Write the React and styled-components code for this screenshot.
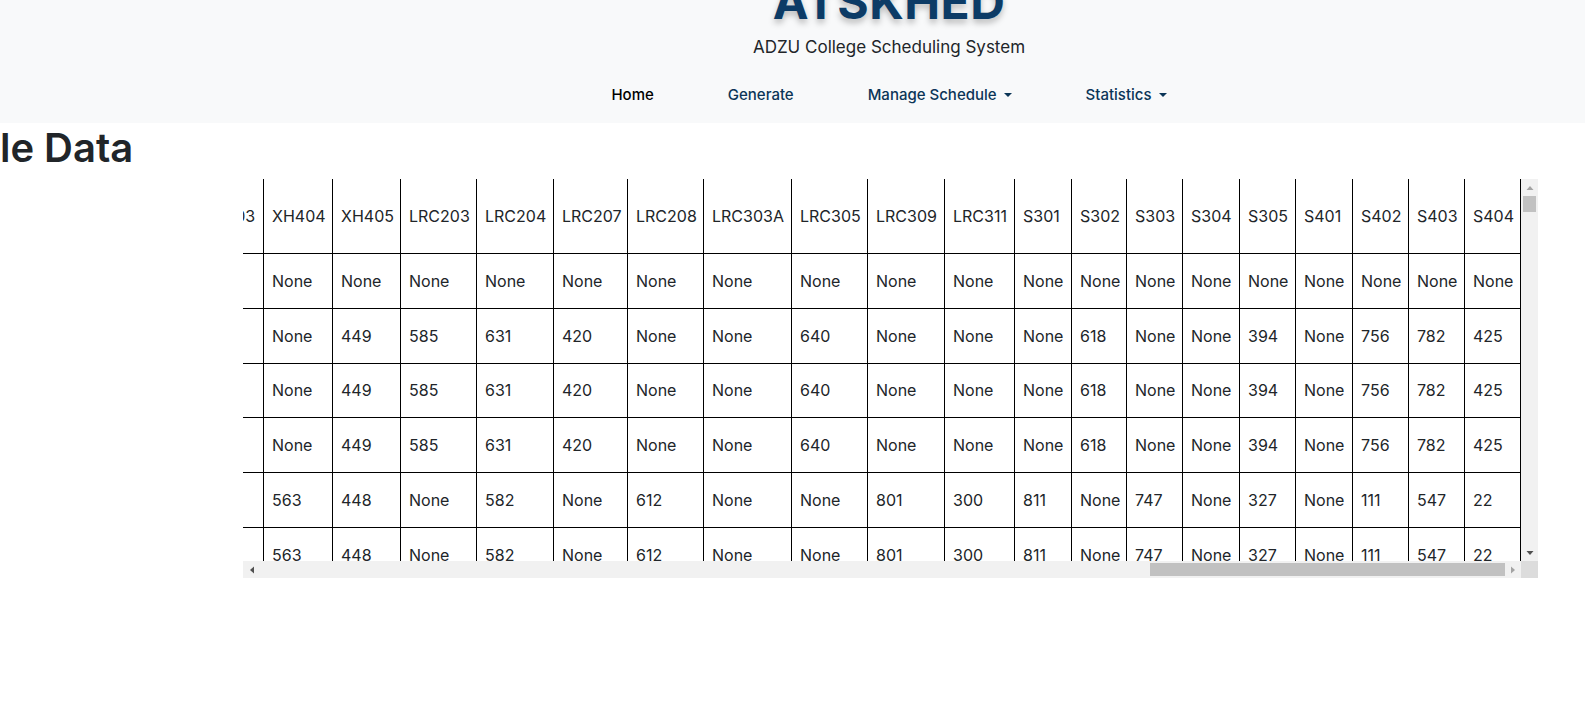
import React, { useLayoutEffect, useRef, useState } from 'react';
import styled, { createGlobalStyle } from 'styled-components';

const GlobalStyle = createGlobalStyle`
  html, body {
    margin: 0;
    overflow: hidden;
    background: #fff;
  }
  body {
    font-family: Inter, "Noto Sans", sans-serif;
    color: #212529;
  }
`;

const Header = styled.header`
  display: flex;
  flex-direction: column;
  align-items: center;
  background-color: #f8f9fa;
  padding: 0 0 10px 193px;
`;

const Title = styled.h1`
  margin: -27px 0 0;
  font-size: 48px;
  line-height: 58px;
  font-weight: 700;
  letter-spacing: 0.5px;
  color: #0c3b66;
  text-shadow: 0 4px 6px rgba(0, 0, 0, 0.25);
`;

const Subtitle = styled.div`
  margin-top: 4px;
  font-size: 17px;
  line-height: 24px;
  color: #212529;
`;

const Nav = styled.nav`
  display: flex;
  margin-top: 17px;
`;

const NavLink = styled.a`
  padding: 8px 37px;
  font-size: 15px;
  line-height: 21px;
  font-weight: 500;
  color: ${props => props.$active ? '#000' : '#0b3557'};
  text-decoration: none;
  cursor: pointer;
  ${props => props.$dropdown && `
    &::after {
      content: "";
      display: inline-block;
      margin-left: 7px;
      vertical-align: 3px;
      border-top: 4px solid;
      border-left: 4px solid transparent;
      border-right: 4px solid transparent;
    }
  `}
`;

const Heading = styled.h2`
  margin: 1px 0 0 -147px;
  font-size: 40px;
  line-height: 48px;
  font-weight: 600;
  color: #212529;
  white-space: nowrap;
`;

const TableFrame = styled.div`
  display: grid;
  grid-template-columns: 1278px 17px;
  grid-template-rows: 382px 17px;
  margin: 7px 0 0 243px;
  width: 1295px;
`;

const TableViewport = styled.div`
  overflow: hidden;
`;

const VBar = styled.div`
  display: flex;
  flex-direction: column;
  background: #f1f1f1;
`;

const HBar = styled.div`
  display: flex;
  background: #f1f1f1;
`;

const Corner = styled.div`
  background: #dcdcdc;
`;

const ScrollBtn = styled.div`
  flex: none;
  width: 17px;
  height: 17px;
  display: flex;
  align-items: center;
  justify-content: center;
  color: ${props => props.$disabled ? '#a3a3a3' : '#505050'};
`;

const Track = styled.div`
  flex: 1;
  display: flex;
  flex-direction: ${props => props.$vertical ? 'column' : 'row'};
  min-width: 0;
  min-height: 0;
`;

const Thumb = styled.div`
  flex: none;
  background: #c1c1c1;
  ${props => props.$vertical
    ? 'width: 13px; margin-left: 2px; margin-right: 2px;'
    : 'height: 13px; margin-top: 2px;'}
`;

const Table = styled.table`
  width: ${props => props.$w}px;
  border-collapse: collapse;
  table-layout: fixed;
  font-size: 16px;
  color: #212529;
`;

const Col = styled.col`
  width: ${props => props.$w}px;
`;

const HeadCell = styled.th`
  height: 74px;
  padding: 0 8px;
  text-align: left;
  font-weight: 400;
  white-space: nowrap;
  overflow: hidden;
  border: 1px solid #000;
  border-top: none;
`;

const Cell = styled.td`
  height: 53.8px;
  padding: 0 8px;
  white-space: nowrap;
  overflow: hidden;
  border: 1px solid #000;
`;

const Arrow = ({ dir }) => {
  const pts = {
    up: '0.5,6 7.5,6 4,2',
    down: '0.5,2 7.5,2 4,6',
    left: '6,0.5 6,7.5 2,4',
    right: '2,0.5 2,7.5 6,4',
  }[dir];
  return (
    <svg width="8" height="8" viewBox="0 0 8 8">
      <polygon points={pts} fill="currentColor" />
    </svg>
  );
};

const visibleRooms = [
  ['XH404', 69], ['XH405', 68], ['LRC203', 76], ['LRC204', 77], ['LRC207', 74],
  ['LRC208', 76], ['LRC303A', 88], ['LRC305', 76], ['LRC309', 77], ['LRC311', 70],
  ['S301', 57], ['S302', 55], ['S303', 56], ['S304', 57], ['S305', 56],
  ['S401', 57], ['S402', 56], ['S403', 56], ['S404', 56],
];

const widthFor = name => ({ 3: 50, 4: 58, 5: 70, 6: 78, 7: 90 }[name.length] || 70);

const hiddenNames = [
  ...['201', '202', '203', '204', '205', '206', '207', '208'].map(n => 'F' + n),
  ...['301', '302', '303', '304', '305', '306', '307', '308'].map(n => 'F' + n),
  'CL1', 'CL2', 'CL3', 'CL4', 'CL5',
  ...['101', '102', '103', '104', '105', '106', '201', '202', '203', '204', '205'].map(n => 'MH' + n),
  ...['201', '202', '203', '204', '205', '206', '301', '302', '303', '304', '305', '306', '307', '401', '402', '403'].map(n => 'XH' + n),
];

const rooms = [
  ['Time Slot', 150],
  ...hiddenNames.map(n => [n, widthFor(n)]),
  ...visibleRooms,
];

const tableWidth = rooms.reduce((sum, [, w]) => sum + w, 0);

const rowA = ['None', '449', '585', '631', '420', 'None', 'None', '640', 'None', 'None', 'None', '618', 'None', 'None', '394', 'None', '756', '782', '425'];
const rowB = ['563', '448', 'None', '582', 'None', '612', 'None', 'None', '801', '300', '811', 'None', '747', 'None', '327', 'None', '111', '547', '22'];

const days = ['Monday', 'Tuesday', 'Wednesday', 'Thursday', 'Friday', 'Saturday'];
const slots = ['7:30', '9:00', '10:30', '12:00', '1:30', '3:00', '4:30', '6:00'];

// deterministic filler for the rows we never see
const seeded = (r, c) => {
  const v = Math.abs(Math.sin(r * 91.7 + c * 13.3) * 10000) % 1;
  return v < 0.4 ? 'None' : String(Math.floor(v * 900) + 10);
};

const makeRows = () => {
  const rows = [];
  for (let r = 0; r < 150; r++) {
    const label = days[Math.floor(r / 25) % 6] + ' ' + slots[r % 8];
    let tail;
    if (r === 0) tail = visibleRooms.map(() => 'None');
    else if (r < 4) tail = rowA;
    else if (r < 6) tail = rowB;
    else tail = visibleRooms.map((_, c) => seeded(r, c + 100));
    const head = hiddenNames.map((_, c) => (r === 0 ? 'None' : seeded(r, c)));
    rows.push([label, ...head, ...tail]);
  }
  return rows;
};

const rows = makeRows();

const TRACK = 17 * 2;

export default function App() {
  const viewRef = useRef(null);
  const [bars, setBars] = useState({ hSize: 0, hPos: 0, vSize: 0, vPos: 0 });

  useLayoutEffect(() => {
    const el = viewRef.current;
    if (!el) return;
    el.scrollLeft = el.scrollWidth;
    const hTrack = el.clientWidth + 1 - TRACK;
    const vTrack = el.clientHeight - TRACK;
    const hSize = Math.round(hTrack * el.clientWidth / el.scrollWidth);
    const vSize = Math.max(16, Math.round(vTrack * el.clientHeight / el.scrollHeight));
    const hMax = el.scrollWidth - el.clientWidth;
    const vMax = el.scrollHeight - el.clientHeight;
    setBars({
      hSize,
      hPos: hMax ? Math.round((hTrack - hSize) * el.scrollLeft / hMax) : 0,
      vSize,
      vPos: vMax ? Math.round((vTrack - vSize) * el.scrollTop / vMax) : 0,
    });
  }, []);

  return (
    <>
      <GlobalStyle />
      <Header>
        <Title>ATSKHED</Title>
        <Subtitle>ADZU College Scheduling System</Subtitle>
        <Nav>
          <NavLink $active>Home</NavLink>
          <NavLink>Generate</NavLink>
          <NavLink $dropdown>Manage Schedule</NavLink>
          <NavLink $dropdown>Statistics</NavLink>
        </Nav>
      </Header>
      <Heading>Schedule Data</Heading>
      <TableFrame>
        <TableViewport ref={viewRef}>
          <Table $w={tableWidth}>
            <colgroup>
              {rooms.map(([name, w]) => <Col key={name} $w={w} />)}
            </colgroup>
            <thead>
              <tr>
                {rooms.map(([name]) => <HeadCell key={name}>{name}</HeadCell>)}
              </tr>
            </thead>
            <tbody>
              {rows.map((row, r) => (
                <tr key={r}>
                  {row.map((val, c) => <Cell key={c}>{val}</Cell>)}
                </tr>
              ))}
            </tbody>
          </Table>
        </TableViewport>
        <VBar>
          <ScrollBtn $disabled={bars.vPos === 0}><Arrow dir="up" /></ScrollBtn>
          <Track $vertical>
            <Thumb $vertical style={{ height: bars.vSize, marginTop: bars.vPos }} />
          </Track>
          <ScrollBtn><Arrow dir="down" /></ScrollBtn>
        </VBar>
        <HBar>
          <ScrollBtn><Arrow dir="left" /></ScrollBtn>
          <Track>
            <Thumb style={{ width: bars.hSize, marginLeft: bars.hPos }} />
          </Track>
          <ScrollBtn $disabled><Arrow dir="right" /></ScrollBtn>
        </HBar>
        <Corner />
      </TableFrame>
    </>
  );
}
